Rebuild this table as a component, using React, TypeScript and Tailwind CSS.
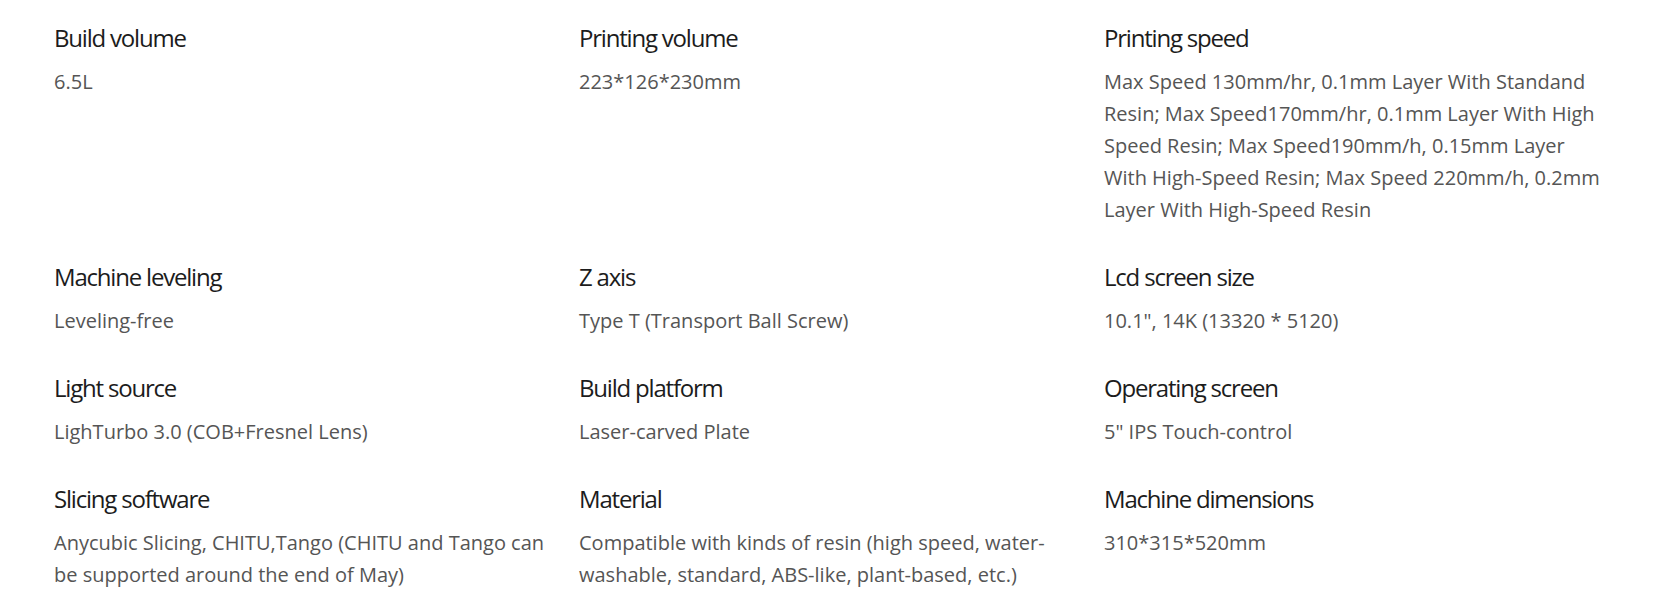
const specs: { title: string; value: string }[][] = [
  [
    { title: "Build volume", value: "6.5L" },
    { title: "Printing volume", value: "223*126*230mm" },
    {
      title: "Printing speed",
      value:
        "Max Speed 130mm/hr, 0.1mm Layer With Standand Resin; Max Speed170mm/hr, 0.1mm Layer With High Speed Resin; Max Speed190mm/h, 0.15mm Layer With High-Speed Resin; Max Speed 220mm/h, 0.2mm Layer With High-Speed Resin",
    },
  ],
  [
    { title: "Machine leveling", value: "Leveling-free" },
    { title: "Z axis", value: "Type T (Transport Ball Screw)" },
    { title: "Lcd screen size", value: '10.1", 14K (13320 * 5120)' },
  ],
  [
    { title: "Light source", value: "LighTurbo 3.0 (COB+Fresnel Lens)" },
    { title: "Build platform", value: "Laser-carved Plate" },
    { title: "Operating screen", value: '5" IPS Touch-control' },
  ],
  [
    {
      title: "Slicing software",
      value: "Anycubic Slicing, CHITU,Tango (CHITU and Tango can be supported around the end of May)",
    },
    {
      title: "Material",
      value: "Compatible with kinds of resin (high speed, water-washable, standard, ABS-like, plant-based, etc.)",
    },
    { title: "Machine dimensions", value: "310*315*520mm" },
  ],
];

function SpecItem({ title, value }: { title: string; value: string }) {
  return (
    <div className="pr-[25px]">
      <h3 className="text-[24px] leading-[30px] tracking-[-1.2px] text-[#1c1c1c] font-normal mb-[13px]">
        {title}
      </h3>
      <p className="text-[20px] leading-[32px] text-[#555555]">{value}</p>
    </div>
  );
}

export default function App() {
  return (
    <div
      className="w-[1666px] h-[604px] bg-white px-[54px] pt-[23px]"
      style={{ fontFamily: '"Open Sans", "Liberation Sans", sans-serif' }}
    >
      <div className="flex flex-col gap-[36px]">
        {specs.map((row, i) => (
          <div key={i} className="grid grid-cols-[525px_525px_525px]">
            {row.map((s) => (
              <SpecItem key={s.title} title={s.title} value={s.value} />
            ))}
          </div>
        ))}
      </div>
    </div>
  );
}
